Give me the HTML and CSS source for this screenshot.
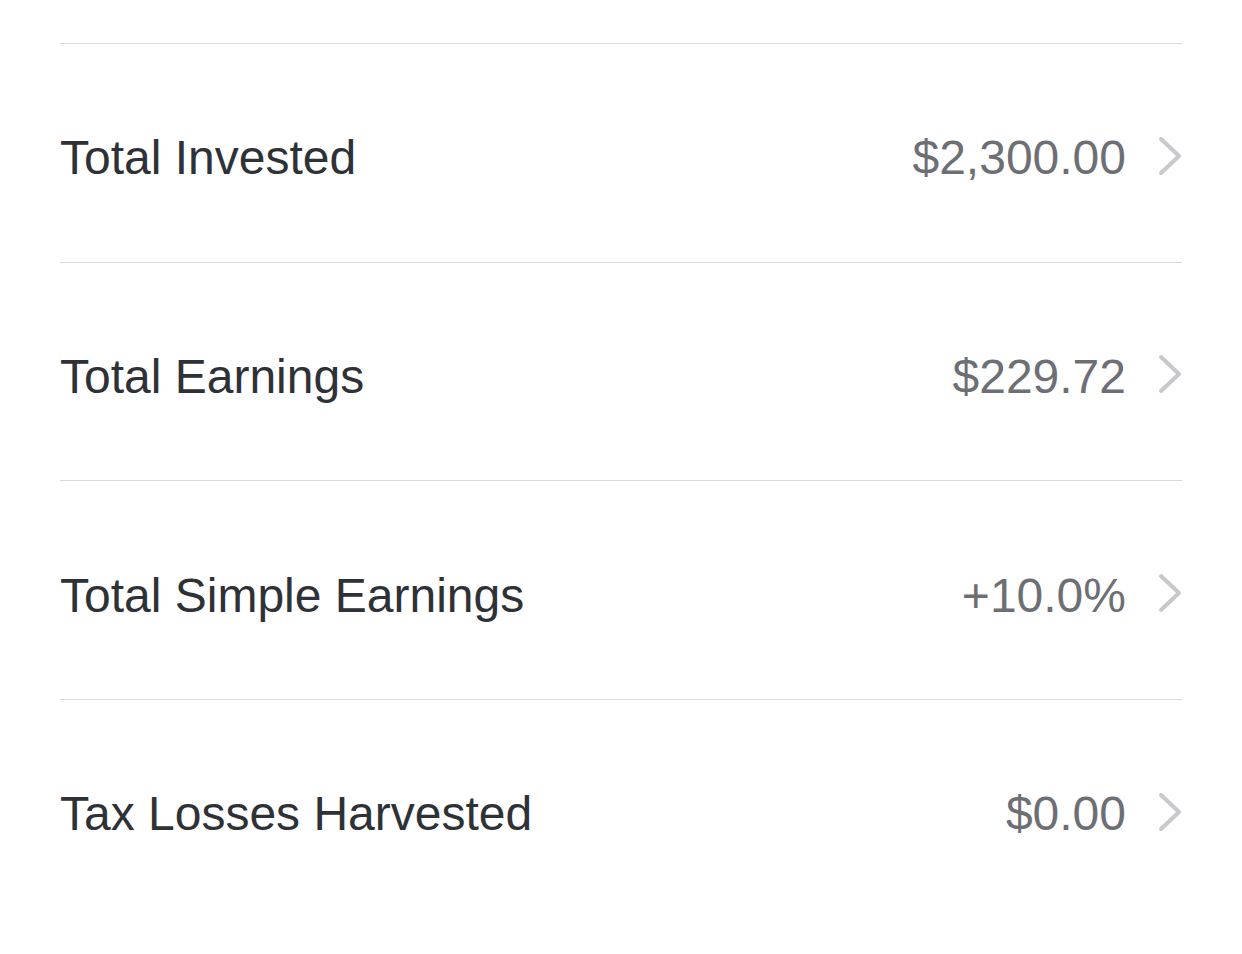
FILE: index.html
```html
<!DOCTYPE html>
<html>
<head>
<meta charset="utf-8">
<link rel="stylesheet" href="styles.css">
</head>
<body>
<ul class="list">
  <li class="row"><span class="label">Total Invested</span><span class="value">$2,300.00</span><svg class="chev" viewBox="0 0 24 40"><path d="M3 3 L21 20 L3 37"/></svg></li>
  <li class="row"><span class="label">Total Earnings</span><span class="value">$229.72</span><svg class="chev" viewBox="0 0 24 40"><path d="M3 3 L21 20 L3 37"/></svg></li>
  <li class="row"><span class="label">Total Simple Earnings</span><span class="value">+10.0%</span><svg class="chev" viewBox="0 0 24 40"><path d="M3 3 L21 20 L3 37"/></svg></li>
  <li class="row"><span class="label">Tax Losses Harvested</span><span class="value">$0.00</span><svg class="chev" viewBox="0 0 24 40"><path d="M3 3 L21 20 L3 37"/></svg></li>
</ul>
</body>
</html>
```
FILE: styles.css
```css
html, body {
  margin: 0;
  padding: 0;
  background: #ffffff;
}
body {
  font-family: "Liberation Sans", Arial, sans-serif;
}
.list {
  list-style: none;
  margin: 43px 60px 0 60px;
  padding: 0;
}
.row {
  display: flex;
  align-items: center;
  height: 218.67px;
  border-top: 1px solid #d9d9db;
  box-sizing: border-box;
  padding-top: 10px;
}
.label {
  flex: 1;
  font-size: 48px;
  color: #2e3136;
}
.value {
  font-size: 48px;
  color: #6d6f75;
  margin-right: 32px;
}
.chev {
  width: 24px;
  height: 40px;
  margin-top: -4px;
  fill: none;
  stroke: #c8c8cc;
  stroke-width: 4;
  stroke-linecap: round;
  stroke-linejoin: round;
}
```
